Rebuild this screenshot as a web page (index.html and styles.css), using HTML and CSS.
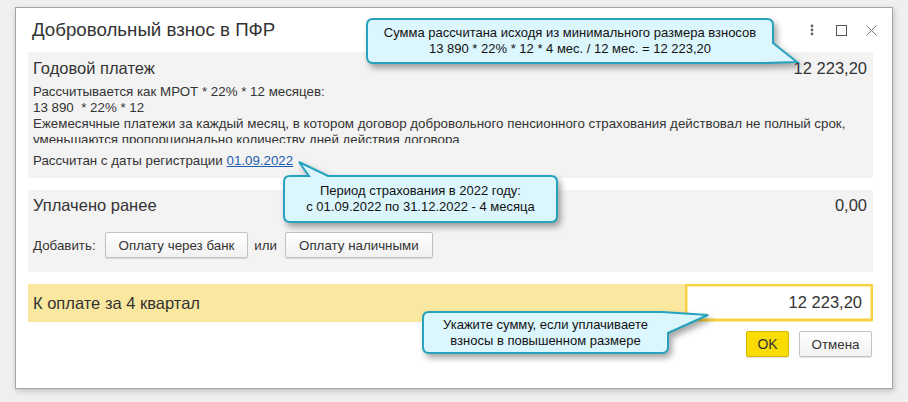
FILE: index.html
```html
<!DOCTYPE html>
<html>
<head>
  <meta charset="UTF-8">
  <title>Добровольный взнос в ПФР</title>
  <link rel="stylesheet" href="styles.css">
</head>
<body>
  <div class="screen">
    <div class="dialog">
      <div class="dialog-header">
        <h1>Добровольный взнос в ПФР</h1>
        <div class="header-icons">
          <svg class="icon-more" width="4" height="12" viewBox="0 0 4 12"><circle cx="2" cy="2" r="1.4" fill="#666"/><circle cx="2" cy="6" r="1.4" fill="#666"/><circle cx="2" cy="10" r="1.4" fill="#666"/></svg>
          <svg class="icon-max" width="11" height="11" viewBox="0 0 11 11"><rect x="0.5" y="0.5" width="10" height="10" fill="none" stroke="#555" stroke-width="1"/></svg>
          <svg class="icon-close" width="11" height="11" viewBox="0 0 11 11"><path d="M0.5 0.5 L10.5 10.5 M10.5 0.5 L0.5 10.5" stroke="#777" stroke-width="1"/></svg>
        </div>
      </div>

      <div class="dialog-body">
        <div class="section section-year">
          <div class="row">
            <span>Годовой платеж</span>
            <span>12 223,20</span>
          </div>
          <div class="desc">
            Рассчитывается как МРОТ * 22% * 12 месяцев:<br>
            13 890 &nbsp;* 22% * 12
          </div>
          <div class="desc desc-clip">
            Ежемесячные платежи за каждый месяц, в котором договор добровольного пенсионного страхования действовал не полный срок, уменьшаются пропорционально количеству дней действия договора
          </div>
          <div class="reg-date">Рассчитан с даты регистрации <a href="#">01.09.2022</a></div>
        </div>

        <div class="section section-paid">
          <div class="row row-paid">
            <span>Уплачено ранее</span>
            <span>0,00</span>
          </div>
          <div class="add-row">
            <span class="add-label">Добавить:</span>
            <button class="btn">Оплату через банк</button>
            <span class="or">или</span>
            <button class="btn">Оплату наличными</button>
          </div>
        </div>

        <div class="total-bar">
          <span>К оплате за 4 квартал</span>
          <div class="total-input">12 223,20</div>
        </div>

        <div class="footer">
          <button class="btn btn-ok">OK</button>
          <button class="btn btn-cancel">Отмена</button>
        </div>
      </div>
    </div>

    <!-- callouts -->
    <div class="callout callout-sum">
      <svg width="445" height="65" viewBox="0 0 445 65">
        <path d="M13 7 H407 Q413 7 413 13 V31 L437 50 L404 51 H13 Q7 51 7 45 V13 Q7 7 13 7 Z"/>
      </svg>
      <div class="callout-text">Сумма рассчитана исходя из минимального размера взносов<br>13 890 * 22% * 12 * 4 мес. / 12 мес. = 12 223,20</div>
    </div>

    <div class="callout callout-period">
      <svg width="300" height="80" viewBox="0 0 300 80">
        <path d="M14 21 H33 L23 7 L52 21 H275 Q281 21 281 27 V61 Q281 67 275 67 H14 Q8 67 8 61 V27 Q8 21 14 21 Z"/>
      </svg>
      <div class="callout-text">Период страхования в 2022 году:<br>с 01.09.2022 по 31.12.2022 - 4 месяца</div>
    </div>

    <div class="callout callout-hint">
      <svg width="305" height="60" viewBox="0 0 305 60">
        <path d="M14 7 H247 L293 10 L253 28 V42 Q253 48 247 48 H14 Q8 48 8 42 V13 Q8 7 14 7 Z"/>
      </svg>
      <div class="callout-text">Укажите сумму, если уплачиваете<br>взносы в повышенном размере</div>
    </div>
  </div>
</body>
</html>
```

FILE: styles.css
```css
* {
  margin: 0;
  padding: 0;
  box-sizing: border-box;
}

body {
  font-family: 'Liberation Sans', Arial, sans-serif;
  background-color: #efefef;
  color: #333;
  width: 908px;
  height: 402px;
  overflow: hidden;
}

.screen {
  position: relative;
  width: 908px;
  height: 402px;
  padding: 7px 0 0 15px;
}

.dialog {
  width: 878px;
  height: 382px;
  background-color: white;
  border: 1px solid #a4a4a4;
  box-shadow: 1px 2px 6px rgba(0, 0, 0, 0.2);
}

.dialog-header {
  height: 44px;
  display: flex;
  align-items: center;
  justify-content: space-between;
  padding: 0 15px 0 16px;
}

.dialog-header h1 {
  font-size: 18.7px;
  font-weight: normal;
  color: #333;
}

.header-icons {
  display: flex;
  align-items: center;
}

.icon-max {
  margin-left: 22px;
}

.icon-close {
  margin-left: 19px;
}

.dialog-body {
  padding: 0 19px 0 12px;
}

.section {
  background-color: #f3f3f3;
  padding: 0 6px 0 5px;
}

.section-year {
  height: 126px;
}

.section-paid {
  height: 82px;
  margin-top: 12px;
}

.row {
  height: 32px;
  display: flex;
  align-items: center;
  justify-content: space-between;
  font-size: 16.5px;
}

.row-paid {
  height: 30px;
}

.desc {
  font-size: 13.33px;
  line-height: 16px;
}

.section-year .desc:first-of-type {
  margin-top: 3px;
}

.desc-clip {
  height: 27px;
  overflow: hidden;
}

.reg-date {
  font-size: 13.33px;
  line-height: 16px;
  margin-top: 10px;
}

.reg-date a {
  color: #1d5fae;
}

.add-row {
  display: flex;
  align-items: center;
  margin-top: 12px;
  font-size: 13.33px;
}

.add-label {
  margin-right: 9px;
}

.or {
  margin: 0 8px 0 6px;
}

.btn {
  font-family: 'Liberation Sans', Arial, sans-serif;
  font-size: 13.33px;
  color: #333;
  height: 26px;
  padding: 0 13px;
  background: linear-gradient(#ffffff, #f1f1f1);
  border: 1px solid #c2c2c2;
  border-radius: 2px;
  box-shadow: 0 1px 1px rgba(0, 0, 0, 0.12);
  cursor: pointer;
}

.total-bar {
  height: 38px;
  margin-top: 12px;
  background-color: #fbe8a0;
  display: flex;
  align-items: center;
  justify-content: space-between;
  padding-left: 5px;
  font-size: 16.5px;
}

.total-input {
  width: 188px;
  height: 37px;
  align-self: flex-start;
  background-color: white;
  border: 2px solid #f6d23e;
  box-shadow: inset 0 0 0 1px #fbe9a6;
  display: flex;
  align-items: center;
  justify-content: flex-end;
  padding-right: 9px;
  font-size: 16.5px;
}

.footer {
  display: flex;
  justify-content: flex-end;
  gap: 10px;
  margin-top: 9px;
  padding-right: 1px;
}

.btn-ok {
  width: 43px;
  padding: 0;
  background: #f9dc03;
  border-color: #d4b800;
  font-size: 14px;
}

.btn-cancel {
  width: 73px;
  padding: 0;
}

/* callouts lie on top of the dialog */
.callout {
  position: absolute;
}

.callout svg {
  position: absolute;
  left: 0;
  top: 0;
  overflow: visible;
  filter: drop-shadow(3px 4px 3px rgba(0, 0, 0, 0.35));
}

.callout path {
  fill: #dcf6fd;
  stroke: #26a2be;
  stroke-width: 2;
}

.callout-text {
  position: absolute;
  display: flex;
  align-items: center;
  justify-content: center;
  text-align: center;
  font-size: 13px;
  line-height: 16px;
  color: #111;
}

.callout-sum {
  left: 360px;
  top: 12px;
}

.callout-sum .callout-text {
  left: 7px;
  top: 7px;
  width: 406px;
  height: 44px;
}

.callout-period {
  left: 276px;
  top: 155px;
}

.callout-period .callout-text {
  left: 8px;
  top: 21px;
  width: 273px;
  height: 46px;
}

.callout-hint {
  left: 415px;
  top: 305px;
}

.callout-hint .callout-text {
  left: 8px;
  top: 7px;
  width: 245px;
  height: 41px;
}
```
